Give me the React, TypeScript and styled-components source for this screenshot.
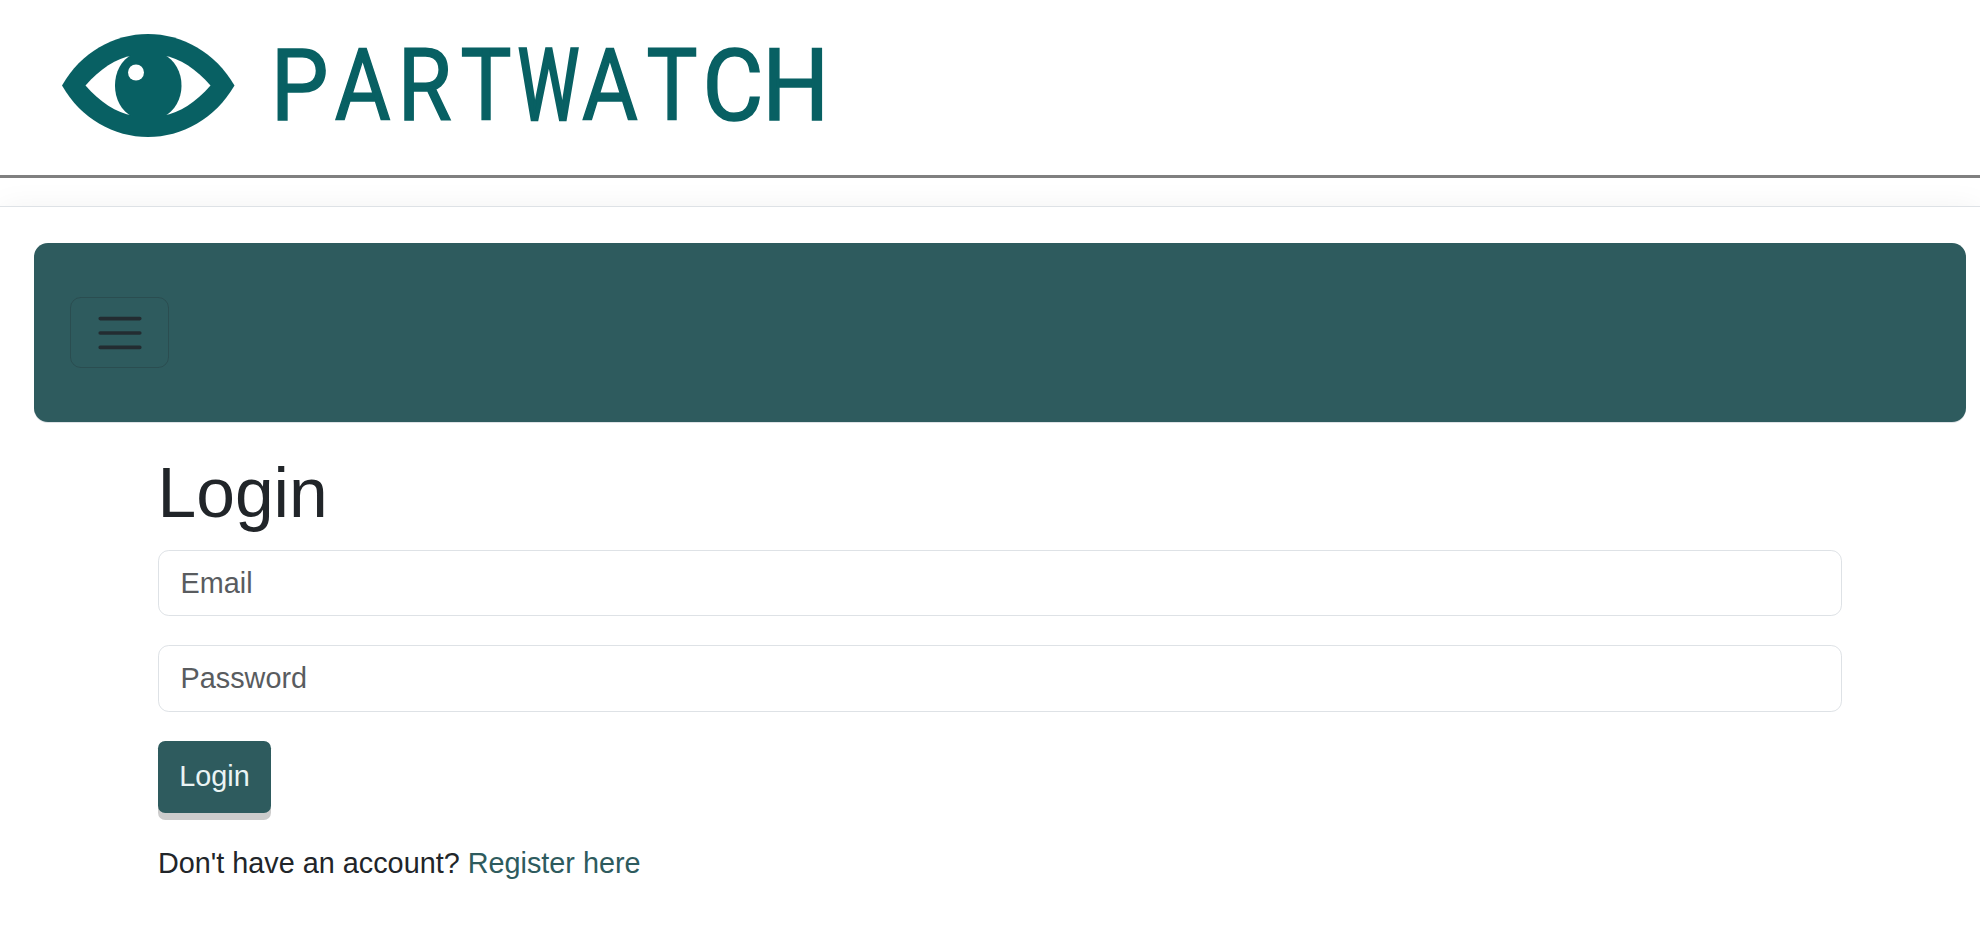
import React from "react";
import styled, { createGlobalStyle } from "styled-components";

const GlobalStyle = createGlobalStyle`
  *, *::before, *::after { box-sizing: border-box; }
  body {
    margin: 0;
    background: #fff;
    color: #212529;
    font-family: "Liberation Sans", Arial, sans-serif;
    font-size: 28.8px;
    line-height: 1.5;
  }
`;

const Header = styled.header`
  display: flex;
  align-items: flex-start;
  height: 178px;
  padding: 34px 0 0 62px;
  border-bottom: 3px solid #808080;
`;

const Eye = styled.svg`
  flex: none;
  width: 173px;
  height: 103px;
`;

const Wordmark = styled.div`
  display: flex;
  margin: 1px 0 0 36.5px;
  height: 103px;
  color: #086063;
  font-family: Roboto, sans-serif;
  font-size: 99.4px;
  line-height: 103px;
`;

const Glyph = styled.span<{ $scale: number; $shift: number; $stroke?: number }>`
  display: flex;
  justify-content: center;
  width: 61.85px;
  transform: translateX(${(p) => p.$shift}px) scaleX(${(p) => p.$scale});
  -webkit-text-stroke: ${(p) => p.$stroke ?? 1.6}px #086063;
`;

const NavSection = styled.section`
  margin-top: 28px;
  height: 217px;
  padding: 36px 14px 0 34px;
  border-top: 1px solid #dee2e6;
  background: #fff;
  box-shadow: 0 0 28px rgba(0, 0, 0, 0.05);
  clip-path: inset(-28px 0 0 0);
`;

const Navbar = styled.nav`
  display: flex;
  align-items: center;
  height: 179px;
  padding-left: 36px;
  border-radius: 14px;
  background: #2e5b5e;
  box-shadow: 0 1px 0 #dee2e6;
`;

const Toggler = styled.button`
  display: flex;
  align-items: center;
  justify-content: center;
  width: 99px;
  height: 71px;
  padding: 1px 0 0 1px;
  border: 1px solid rgba(33, 37, 41, 0.25);
  border-radius: 10.8px;
  background: transparent;
`;

const Form = styled.form`
  display: flex;
  flex-direction: column;
  align-items: flex-start;
  padding: 28px 138px 0 158px;
`;

const Title = styled.h1`
  margin: 0 0 14px -0.5px;
  font-size: 69.6px;
  font-weight: 400;
  line-height: 85px;
`;

const Field = styled.input`
  width: 100%;
  height: 66.4px;
  margin-bottom: 28.8px;
  padding: 0 21.6px;
  border: 1px solid #dee2e6;
  border-radius: 10.8px;
  background: #fff;
  font: inherit;
  &::placeholder { color: #595c5f; opacity: 1; }
`;

const Submit = styled.button`
  width: 113px;
  height: 72px;
  margin: 0.6px 0 29.4px;
  padding: 0 0 1px;
  border: 0;
  border-radius: 7.2px;
  background: #2e5b5e;
  box-shadow: 0 7px 0 #ccc;
  color: #eaf4f4;
  font: inherit;
`;

const Note = styled.p`
  margin: 0;
`;

const Link = styled.a`
  color: #2e5b5e;
  text-decoration: none;
`;

const letters = [
  { char: "P", scale: 0.92, shift: -3.4 },
  { char: "A", scale: 0.86, shift: -1.25 },
  { char: "R", scale: 0.88, shift: -1.3 },
  { char: "T", scale: 0.86, shift: -1.8 },
  { char: "W", scale: 0.7, shift: -1.6, stroke: 2.6 },
  { char: "A", scale: 0.86, shift: -2 },
  { char: "T", scale: 0.86, shift: -1.8 },
  { char: "C", scale: 0.94, shift: -2 },
  { char: "H", scale: 0.945, shift: -1.2 },
];

export default function App() {
  return (
    <>
      <GlobalStyle />
      <Header>
        <Eye viewBox="0 0 173 103" role="img" aria-label="Partwatch">
          <path
            fill="#086063"
            d="M0 51.5C19 18 52 0 86 0S153 18 172.500 51.5C153 85 120 103 86 103S19 85 0 51.5Z"
          />
          <path
            fill="#fff"
            d="M23.5 51.5C38 35 54 24 71 21.500H101C118 24 134 35 148.500 51.500C134 68 118 79 101 81.500H71C54 79 38 68 23.500 51.500Z"
          />
          <path
            fill="#086063"
            d="M71 20H101C113 26 119.500 38 119.500 51.500S113 77 101 83H71C59 77 53 65 53 51.500S59 26 71 20Z"
          />
          <circle cx="74" cy="38.500" r="8" fill="#fff" />
        </Eye>
        <Wordmark>
          {letters.map((l, i) => (
            <Glyph key={i} $scale={l.scale} $shift={l.shift} $stroke={l.stroke}>
              {l.char}
            </Glyph>
          ))}
        </Wordmark>
      </Header>
      <NavSection>
        <Navbar>
          <Toggler type="button" aria-label="Toggle navigation">
            <svg width="54" height="54" viewBox="0 0 30 30" fill="none">
              <path
                stroke="rgba(33,37,41,0.85)"
                strokeLinecap="round"
                strokeMiterlimit="10"
                strokeWidth="2"
                d="M4 7h22M4 15h22M4 23h22"
              />
            </svg>
          </Toggler>
        </Navbar>
      </NavSection>
      <Form>
        <Title>Login</Title>
        <Field type="email" placeholder="Email" />
        <Field type="password" placeholder="Password" />
        <Submit type="button">Login</Submit>
        <Note>
          Don't have an account? <Link href="#">Register here</Link>
        </Note>
      </Form>
    </>
  );
}
